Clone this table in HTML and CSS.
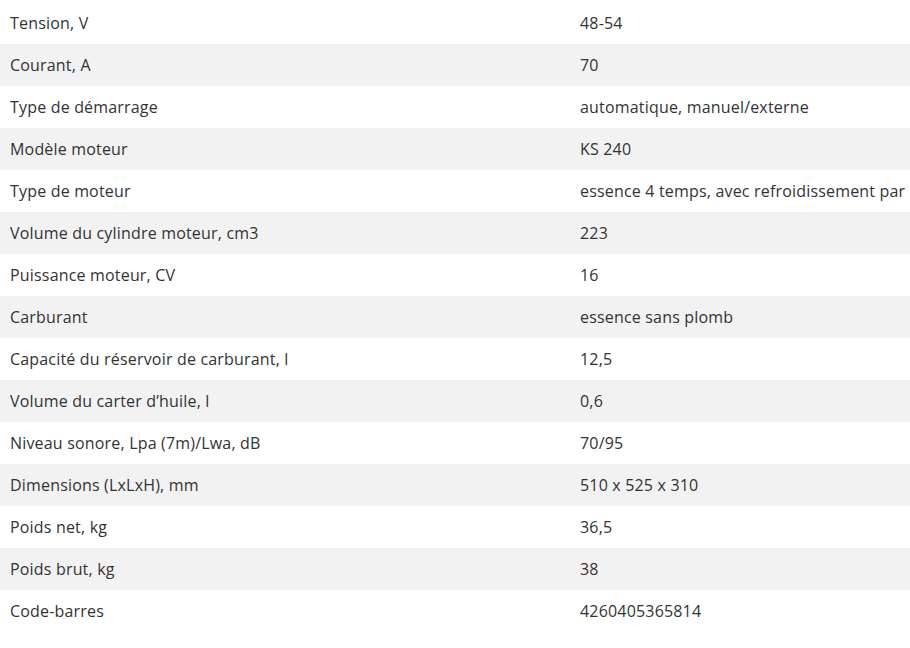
FILE: index.html
```html
<!DOCTYPE html>
<html lang="fr">
<head>
<meta charset="utf-8">
<link rel="stylesheet" href="styles.css">
</head>
<body>
<div class="specs">
  <div class="row"><div class="k">Tension, V</div><div class="v">48-54</div></div>
  <div class="row"><div class="k">Courant, A</div><div class="v">70</div></div>
  <div class="row"><div class="k">Type de démarrage</div><div class="v">automatique, manuel/externe</div></div>
  <div class="row"><div class="k">Modèle moteur</div><div class="v">KS 240</div></div>
  <div class="row"><div class="k">Type de moteur</div><div class="v">essence 4 temps, avec refroidissement par</div></div>
  <div class="row"><div class="k">Volume du cylindre moteur, cm3</div><div class="v">223</div></div>
  <div class="row"><div class="k">Puissance moteur, CV</div><div class="v">16</div></div>
  <div class="row"><div class="k">Carburant</div><div class="v">essence sans plomb</div></div>
  <div class="row"><div class="k">Capacité du réservoir de carburant, l</div><div class="v">12,5</div></div>
  <div class="row"><div class="k">Volume du carter d’huile, l</div><div class="v">0,6</div></div>
  <div class="row"><div class="k">Niveau sonore, Lpa (7m)/Lwa, dB</div><div class="v">70/95</div></div>
  <div class="row"><div class="k">Dimensions (LxLxH), mm</div><div class="v">510 x 525 x 310</div></div>
  <div class="row"><div class="k">Poids net, kg</div><div class="v">36,5</div></div>
  <div class="row"><div class="k">Poids brut, kg</div><div class="v">38</div></div>
  <div class="row"><div class="k">Code-barres</div><div class="v">4260405365814</div></div>
</div>
</body>
</html>
```
FILE: styles.css
```css
html, body {
  margin: 0;
  padding: 0;
  background: #fff;
  overflow: hidden;
}
body {
  font-family: "Open Sans", sans-serif;
  font-size: 16px;
  letter-spacing: 0.18px;
  color: #333;
  padding-top: 2px;
}
.specs {
  display: flex;
  flex-direction: column;
  width: 910px;
}
.row {
  display: grid;
  grid-template-columns: 570px 1fr;
  height: 42px;
  align-items: center;
  white-space: nowrap;
}
.row:nth-child(even) {
  background: #f2f2f2;
}
.k {
  padding-left: 10px;
}
.v {
  padding-left: 10px;
  overflow: hidden;
}
```
